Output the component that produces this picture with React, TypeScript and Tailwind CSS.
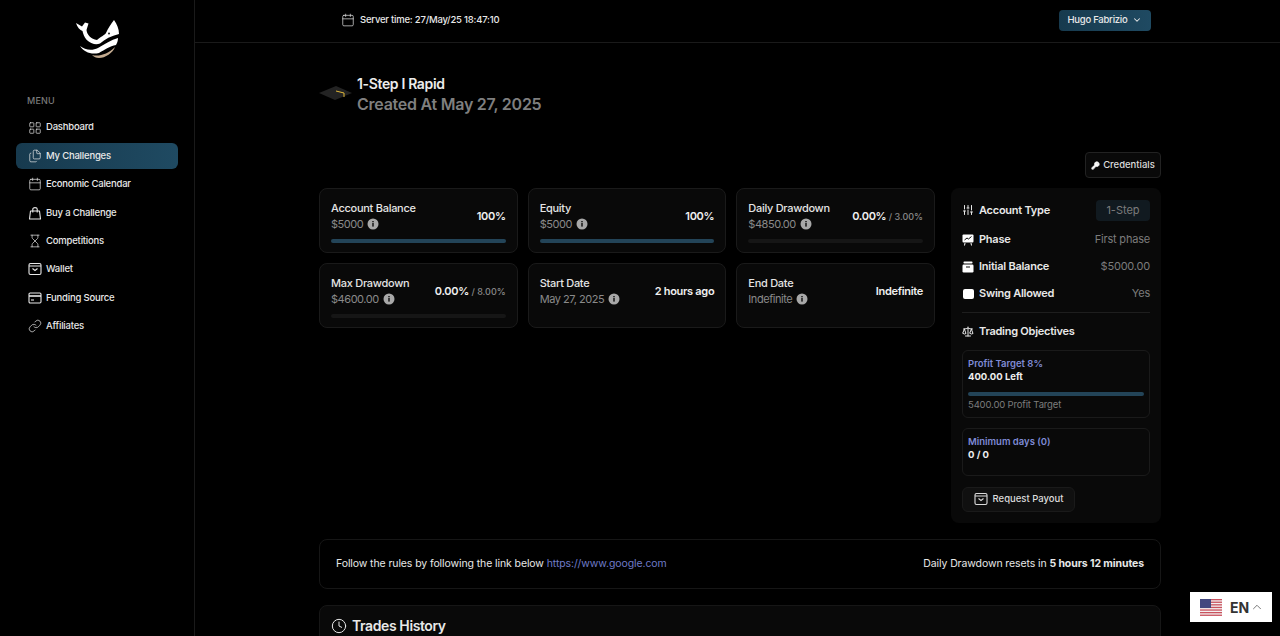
import React from 'react';
import {
  LayoutGrid,
  Calendar,
  Hourglass,
  Link,
  ChevronDown,
  ChevronUp,
  KeyRound,
  SlidersVertical,
  Scale,
  Clock,
  Files,
} from 'lucide-react';

const WalletBox = ({ size = 14 }: { size?: number }) => (
  <svg width={size} height={size} viewBox="0 0 14 14" fill="none" stroke="currentColor" strokeWidth="1.1">
    <rect x="1" y="1.5" width="12" height="11" rx="1.5" />
    <path d="M1 4 H13 M4.5 6.5 L7 8.5 L9.5 6.5" />
  </svg>
);

const CardIcon = ({ size = 14 }: { size?: number }) => (
  <svg width={size} height={size} viewBox="0 0 14 14" fill="none" stroke="currentColor" strokeWidth="1.1">
    <rect x="1" y="2" width="12" height="10" rx="1.2" />
    <path d="M1 5 H13" strokeWidth="1.6" />
    <path d="M3 9 H6" />
  </svg>
);

const BagIcon = ({ size = 14 }: { size?: number }) => (
  <svg width={size} height={size} viewBox="0 0 14 14" fill="none" stroke="currentColor" strokeWidth="1.1">
    <path d="M2.5 5 H11.5 L12.5 13 H1.5 Z" strokeLinejoin="round" />
    <path d="M4.8 6.5 V3 C4.8 1.2 9.2 1.2 9.2 3 V6.5" />
  </svg>
);

const menu = [
  { label: 'Dashboard', icon: LayoutGrid },
  { label: 'My Challenges', icon: Files, active: true },
  { label: 'Economic Calendar', icon: Calendar },
  { label: 'Buy a Challenge', icon: BagIcon },
  { label: 'Competitions', icon: Hourglass },
  { label: 'Wallet', icon: WalletBox },
  { label: 'Funding Source', icon: CardIcon },
  { label: 'Affiliates', icon: Link },
];

const Logo = () => (
  <svg width="46" height="40" viewBox="0 0 46 40">
    <path d="M1 4 L7 7.5 L10 3.5 L13.5 4.5 L11.5 11 C12 16 16 20 22 21 C25 18 30 16 31 14 C33 9 36 5 39 1 C42 5 44 10 44 15 C36 17 30 20 25 24.5 C18 27 10 22 8 14 L7.5 12 C5 11 2 8 1 4 Z" fill="#ffffff" />
    <path d="M5 27 C10 31 17 32 23 29 C30 25 36 21 43 19 C43 22 42 24 41 26 C35 27 29 31 24 34 C16 36 9 33 5 27 Z" fill="#ffffff" />
    <path d="M17 36 C24 38 33 35 40 28 C38 34 30 39 24 39 C21 39 19 38 17 36 Z" fill="#c4ab90" />
    <circle cx="34" cy="14.5" r="1" fill="#222" />
  </svg>
);

const Cap = () => (
  <svg width="33" height="16" viewBox="0 0 33 16">
    <path d="M0 7 L17 0 L33 7 L16 14 Z" fill="#232323" />
    <path d="M17 5 L25 7 L25 11" fill="none" stroke="#e0b83a" strokeWidth="1" />
  </svg>
);

const InfoDot = () => (
  <svg width="12" height="12" viewBox="0 0 12 12">
    <circle cx="6" cy="6" r="5.5" fill="#a8a8a8" />
    <rect x="5.3" y="5" width="1.4" height="3.6" fill="#0a0a0a" />
    <rect x="5.3" y="3" width="1.4" height="1.3" fill="#0a0a0a" />
  </svg>
);

const PhaseIcon = () => (
  <svg width="12" height="12" viewBox="0 0 12 12">
    <rect x="0.5" y="0.5" width="11" height="8" rx="1" fill="#fff" />
    <path d="M2.5 6 L5 4 L6.5 5 L9.5 2.5" fill="none" stroke="#0a0a0a" strokeWidth="1" />
    <path d="M3 9 L2.5 11.5 M9 9 L9.5 11.5" stroke="#fff" strokeWidth="1" />
  </svg>
);

const BalanceIcon = () => (
  <svg width="12" height="12" viewBox="0 0 12 12">
    <rect x="1.5" y="0.5" width="9" height="2" rx="0.8" fill="#fff" />
    <rect x="0.5" y="3.5" width="11" height="8" rx="1.2" fill="#fff" />
    <path d="M4 6 H8" stroke="#0a0a0a" strokeWidth="1" />
  </svg>
);

const Bar = ({ full }: { full?: boolean }) => (
  <div className="mt-[7px] h-1 rounded-full bg-[#161616]">
    {full && <div className="h-1 w-full rounded-full bg-[#234458]" />}
  </div>
);

const Stat = ({
  title,
  sub,
  value,
  limit,
  bar,
  full,
}: {
  title: string;
  sub: string;
  value: string;
  limit?: string;
  bar?: boolean;
  full?: boolean;
}) => (
  <div className="h-[65px] rounded-lg border border-[#1a1a1a] bg-[#090909] px-[11px] pt-[11px]">
    <div className="flex items-center justify-between">
      <div>
        <div className="text-[11px] leading-[16px] font-medium tracking-[-0.28px] text-[#e4e4e4]">{title}</div>
        <div className="flex items-center gap-[4px] text-[11px] leading-[16px] tracking-[-0.45px] text-[#8a8a8a]">
          {sub}
          <InfoDot />
        </div>
      </div>
      <div className="text-[11px] font-semibold tracking-[-0.3px] text-[#f0f0f0]">
        {value}
        {limit && <span className="text-[9px] font-medium tracking-normal text-[#8a8a8a]"> / {limit}</span>}
      </div>
    </div>
    {bar && <Bar full={full} />}
  </div>
);

const Row = ({ icon, label, value }: { icon: React.ReactNode; label: string; value: string }) => (
  <div className="flex h-[27px] items-center justify-between">
    <div className="flex items-center gap-[5px] text-[11px] font-semibold tracking-[-0.25px] text-[#e8e8e8]">
      <span className="flex w-[12px] justify-center">{icon}</span>
      {label}
    </div>
    <span className="text-[11px] tracking-[-0.2px] text-[#7c7c7c]">{value}</span>
  </div>
);

const Flag = () => (
  <svg width="22" height="17" viewBox="0 0 22 17">
    <rect width="22" height="17" fill="#f3f0f0" />
    {[0, 2.6, 5.2, 7.8, 10.4, 13, 15.6].map((y) => (
      <rect key={y} y={y} width="22" height="1.3" fill="#c9525e" />
    ))}
    <rect width="11" height="9" fill="#42477f" />
  </svg>
);

export default function App() {
  return (
    <div
      className="relative flex h-[636px] w-[1280px] overflow-hidden bg-black text-white"
      style={{ fontFamily: 'Inter, "Liberation Sans", sans-serif' }}
    >
      <aside className="w-[195px] shrink-0 border-r border-[#1a1a1a]">
        <div className="flex justify-center pt-[19px] pl-[2px]">
          <Logo />
        </div>
        <div className="mt-[35px] pl-[27px] text-[9px] font-medium tracking-[0.2px] text-[#7a7a7a]">MENU</div>
        <nav className="mt-[7px] flex flex-col gap-[2.4px] px-[16px]">
          {menu.map((item) => (
            <div
              key={item.label}
              className={
                item.active
                  ? 'flex h-[26px] items-center gap-[4px] rounded-md bg-gradient-to-r from-[#173a4e] to-[#1f4a62] pl-[12px] text-[9.5px] font-medium tracking-[-0.2px] text-[#e8e8e8]'
                  : 'flex h-[26px] items-center gap-[4px] pl-[12px] text-[9.5px] font-medium tracking-[-0.2px] text-[#e8e8e8]'
              }
            >
              <item.icon size={14} strokeWidth={1.2} />
              {item.label}
            </div>
          ))}
        </nav>
      </aside>

      <main className="min-w-0 flex-1">
        <header className="flex h-[43px] items-center justify-between border-b border-[#1a1a1a] pr-[129px] pb-[2px] pl-[146px]">
          <div className="flex items-center gap-[5px] text-[9.5px] font-medium tracking-[-0.22px] text-[#e8e8e8]">
            <Calendar size={14} strokeWidth={1.2} />
            Server time: 27/May/25 18:47:10
          </div>
          <div className="flex h-[21px] w-[92px] items-center justify-center gap-[5px] rounded-[4px] bg-gradient-to-r from-[#173a4e] to-[#1f4a62] text-[9.5px] font-medium tracking-[-0.25px] text-[#e8e8e8]">
            Hugo Fabrizio
            <ChevronDown size={10} strokeWidth={2.5} />
          </div>
        </header>

        <div className="ml-[124px] w-[842px] pt-[31px]">
          <div className="flex items-center gap-[5px]">
            <Cap />
            <div>
              <div className="text-[14px] leading-[20px] font-semibold tracking-[-0.35px] text-[#ececec]">1-Step I Rapid</div>
              <div className="text-[16px] leading-[20px] font-semibold tracking-[-0.25px] text-[#7f7f7f]">Created At May 27, 2025</div>
            </div>
          </div>

          <div className="mt-[38px] flex justify-end">
            <div className="flex h-[26px] w-[76px] items-center justify-center gap-[3px] rounded-[4px] border border-[#222] bg-[#090909] text-[9.5px] font-medium text-[#dcdcdc]">
              <KeyRound size={9} className="fill-white" />
              Credentials
            </div>
          </div>

          <div className="mt-[10px] flex gap-[16px]">
            <div className="grid h-[140px] w-[616px] grid-cols-3 gap-x-[10px] gap-y-[10px]">
              <Stat title="Account Balance" sub="$5000" value="100%" bar full />
              <Stat title="Equity" sub="$5000" value="100%" bar full />
              <Stat title="Daily Drawdown" sub="$4850.00" value="0.00%" limit="3.00%" bar />
              <Stat title="Max Drawdown" sub="$4600.00" value="0.00%" limit="8.00%" bar />
              <Stat title="Start Date" sub="May 27, 2025" value="2 hours ago" />
              <Stat title="End Date" sub="Indefinite" value="Indefinite" />
            </div>

            <div className="w-[210px] rounded-lg bg-[#090909] px-[11px] pt-[10px] pb-[11px]">
              <div className="flex h-[24px] items-center justify-between">
                <div className="flex items-center gap-[5px] text-[11px] font-semibold tracking-[-0.25px] text-[#e8e8e8]">
                  <span className="flex w-[12px] justify-center">
                    <SlidersVertical size={12} />
                  </span>
                  Account Type
                </div>
                <span className="flex h-[21px] w-[54px] items-center justify-center rounded-[4px] bg-[#111a20] text-[11px] text-[#7c7c7c]">
                  1-Step
                </span>
              </div>
              <div className="mt-[4px]">
                <Row icon={<PhaseIcon />} label="Phase" value="First phase" />
                <Row icon={<BalanceIcon />} label="Initial Balance" value="$5000.00" />
                <Row icon={<span className="block h-[10px] w-[11px] rounded-[2px] bg-white" />} label="Swing Allowed" value="Yes" />
              </div>
              <div className="mt-[5px] border-t border-[#1e1e1e]" />
              <div className="mt-[10px] flex items-center gap-[5px] text-[11px] font-semibold tracking-[-0.25px] text-[#e8e8e8]">
                <span className="flex w-[12px] justify-center">
                  <Scale size={13} />
                </span>
                Trading Objectives
              </div>

              <div className="mt-[10px] h-[68px] rounded-[6px] border border-[#1a1a1a] px-[5px] pt-[6px]">
                <div className="text-[9.5px] leading-[13px] font-semibold text-[#7f8bd6]">Profit Target 8%</div>
                <div className="text-[9.5px] leading-[13px] font-bold text-[#efefef]">400.00 Left</div>
                <div className="mt-[9px] h-1 rounded-full bg-[#234458]" />
                <div className="mt-[2px] text-[9.5px] leading-[13px] tracking-[-0.15px] text-[#7c7c7c]">5400.00 Profit Target</div>
              </div>
              <div className="mt-[10px] h-[48px] rounded-[6px] border border-[#1a1a1a] px-[5px] pt-[6px]">
                <div className="text-[9.5px] leading-[13px] font-semibold text-[#7f8bd6]">Minimum days (0)</div>
                <div className="text-[9.5px] leading-[13px] font-bold text-[#efefef]">0 / 0</div>
              </div>
              <div className="mt-[11px] flex h-[25px] w-[113px] items-center justify-center gap-[5px] rounded-[6px] border border-[#1a1a1a] bg-[#101010] text-[9.5px] font-medium text-[#dcdcdc]">
                <WalletBox />
                Request Payout
              </div>
            </div>
          </div>

          <div className="mt-[16px] flex h-[50px] items-center justify-between rounded-lg border border-[#161616] px-[16px] text-[10.5px] tracking-[-0.1px] text-[#e8e8e8]">
            <div>
              Follow the rules by following the link below <span className="text-[#6f7bc8]">https://www.google.com</span>
            </div>
            <div>
              Daily Drawdown resets in <span className="font-bold">5 hours 12 minutes</span>
            </div>
          </div>

          <div className="mt-[16px] flex h-[60px] items-start gap-[5px] rounded-t-lg border border-[#161616] bg-[#090909] px-[11px] pt-[9px] text-[14px] font-semibold tracking-[-0.4px] text-[#e8e8e8]">
            <Clock size={16} strokeWidth={1.5} className="mt-[3px]" />
            Trades History
          </div>
        </div>
      </main>

      <div className="absolute top-[592px] left-[1190px] flex h-[30px] w-[82px] items-center gap-[8px] bg-white pl-[10px] text-[14px] font-bold text-[#333]">
        <Flag />
        EN
        <ChevronUp size={14} strokeWidth={1.5} className="-ml-[7px] text-[#666]" />
      </div>
    </div>
  );
}
